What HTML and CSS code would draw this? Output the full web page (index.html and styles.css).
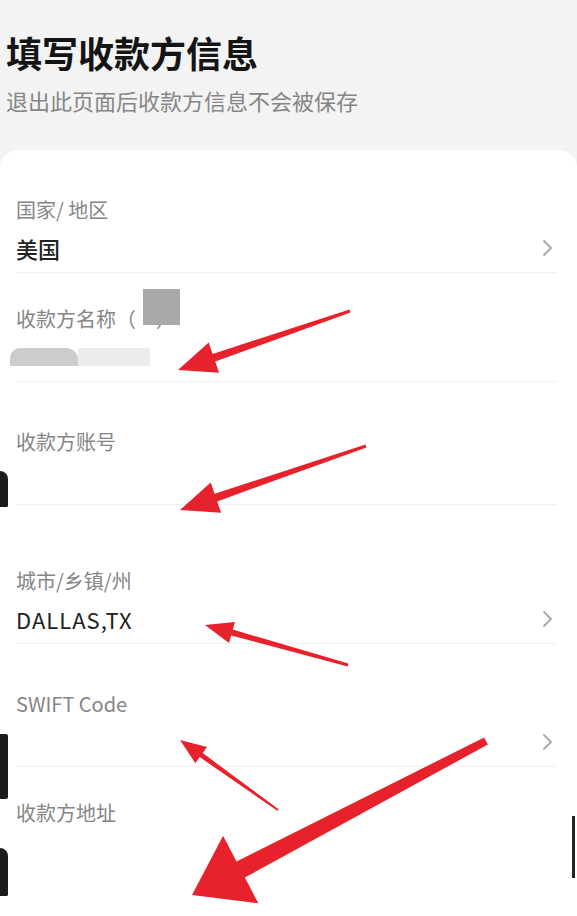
FILE: index.html
```html
<!DOCTYPE html>
<html lang="zh-CN">
<head>
    <meta charset="UTF-8">
    <meta name="viewport" content="width=device-width, initial-scale=1.0">
    <title>填写收款方信息</title>
    <link rel="stylesheet" href="styles.css">
</head>
<body>
    <div class="header">
        <h1>填写收款方信息</h1>
        <p class="subtitle">退出此页面后收款方信息不会被保存</p>
    </div>

    <div class="card">
        <div class="field">
            <div class="label">国家/ 地区</div>
            <div class="value-row">
                <span class="value strong">美国</span>
                <svg class="chevron" width="12" height="18" viewBox="0 0 12 18"><polyline points="3,2 10,9 3,16" /></svg>
            </div>
        </div>

        <div class="field field-compact">
            <div class="label">收款方名称（　）</div>
            <div class="value-row">
                <span class="value">
                    <span class="blur blur-dark"></span><span class="blur blur-light"></span>
                </span>
            </div>
            <div class="mask mask-square"></div>
        </div>

        <div class="field">
            <div class="label">收款方账号</div>
            <div class="value-row">
                <span class="value"></span>
            </div>
            <div class="mask edge edge-account"></div>
        </div>

        <div class="field field-spacious">
            <div class="label">城市/乡镇/州</div>
            <div class="value-row">
                <span class="value latin">DALLAS,TX</span>
                <svg class="chevron" width="12" height="18" viewBox="0 0 12 18"><polyline points="3,2 10,9 3,16" /></svg>
            </div>
        </div>

        <div class="field">
            <div class="label">SWIFT Code</div>
            <div class="value-row">
                <span class="value"></span>
                <svg class="chevron" width="12" height="18" viewBox="0 0 12 18"><polyline points="3,2 10,9 3,16" /></svg>
            </div>
            <div class="mask edge edge-swift"></div>
        </div>

        <div class="field field-compact field-last">
            <div class="label">收款方地址</div>
            <div class="value-row">
                <span class="value"></span>
            </div>
            <div class="mask edge edge-address"></div>
            <div class="mask edge-right"></div>
        </div>
    </div>

    <!-- annotation arrows drawn over the screenshot -->
    <svg class="arrows" width="577" height="916" viewBox="0 0 577 916">
        <polygon points="178,370 219.1,372.8 215.2,361.5 350.5,312.4 349.5,309.6 212.6,353.9 208.7,342.6" />
        <polygon points="180,510 221.1,512.7 217.2,501.4 366.5,447.4 365.5,444.6 214.6,493.8 210.7,482.5" />
        <polygon points="205,625 229,643.1 231.2,635.4 347.6,666.4 348.4,663.6 232.8,629.6 235,621.9" />
        <polygon points="180,740 195.4,763.2 199.7,757.1 277.4,810.8 278.6,809.2 202.7,753.1 207,747" />
        <polygon points="192,895 258.3,903.2 244.9,877.5 487.9,744.5 484.1,737.5 236.5,861.5 223.1,835.8" />
    </svg>
</body>
</html>
```

FILE: styles.css
```css
html {
    background: #f3f3f4;
}
body {
    margin: 0;
    position: relative;
    min-height: 916px;
    font-family: 'Noto Sans CJK SC', 'Noto Sans', sans-serif;
    color: #1f1f1f;
    overflow: hidden;
}
.header {
    padding: 30px 6px 0;
}
h1 {
    margin: 0;
    font-size: 36px;
    line-height: 44px;
    font-weight: 700;
    color: #141414;
}
.subtitle {
    margin: 11px 0 0;
    font-size: 22px;
    line-height: 30px;
    color: #858585;
}
.card {
    margin-top: 35px;
    background: #fff;
    border-radius: 18px 18px 0 0;
    padding: 0 20px 80px 16px;
}
.field {
    position: relative;
    padding: 47px 0 9px;
    border-bottom: 1px solid #f0f0f0;
}
.field-compact {
    padding-top: 33px;
}
.field-spacious {
    padding-top: 63px;
}
.field-last {
    border-bottom: none;
}
.label {
    font-size: 20px;
    line-height: 26px;
    color: #858585;
}
.value-row {
    margin-top: 10px;
    display: flex;
    justify-content: space-between;
    align-items: center;
    height: 30px;
}
.value {
    display: flex;
    align-items: center;
    font-size: 22px;
    line-height: 30px;
    color: #222;
}
.strong {
    font-weight: 500;
}
.latin {
    letter-spacing: 1px;
}
.chevron {
    margin-right: 4px;
    fill: none;
    stroke: #a8a8a8;
    stroke-width: 1.8;
    stroke-linecap: round;
    stroke-linejoin: round;
}
.blur {
    display: inline-block;
    height: 18px;
}
.blur-dark {
    margin-left: -6px;
    width: 68px;
    background: #cccccc;
    border-radius: 10px 12px 0 0;
}
.blur-light {
    width: 72px;
    background: #ececec;
}
.mask {
    position: absolute;
}
.mask-square {
    top: 16px;
    left: 127px;
    width: 37px;
    height: 36px;
    background: #a9a9a9;
}
.edge {
    left: -16px;
    width: 8px;
    background: #1c1c1c;
    border-radius: 0 2px 2px 0;
}
.edge-account {
    top: 89px;
    height: 36px;
    border-radius: 0 10px 2px 0;
}
.edge-swift {
    top: 90px;
    height: 65px;
}
.edge-address {
    top: 81px;
    height: 48px;
    border-radius: 0 10px 2px 0;
}
.edge-right {
    top: 49px;
    right: -18px;
    width: 3px;
    height: 62px;
    background: #222;
}
.arrows {
    position: absolute;
    top: 0;
    left: 0;
    pointer-events: none;
    fill: #e8222c;
}
```
